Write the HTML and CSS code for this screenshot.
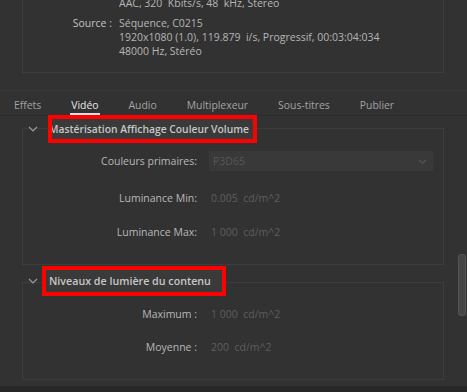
FILE: index.html
```html
<!DOCTYPE html>
<html lang="fr">
<head>
<meta charset="utf-8">
<link rel="stylesheet" href="styles.css">
</head>
<body>
<div class="summary">
  <div class="srow"><span class="slabel"></span><span class="sval">AAC, 320  Kbits/s, 48  kHz, Stereo</span></div>
  <div class="srow gap"><span class="slabel">Source :</span><span class="sval">Séquence, C0215
1920x1080 (1.0), 119.879  i/s, Progressif, 00:03:04:034
48000 Hz, Stéréo</span></div>
</div>
<div class="tabs">
  <span class="tab">Effets</span>
  <span class="tab active">Vidéo</span>
  <span class="tab">Audio</span>
  <span class="tab">Multiplexeur</span>
  <span class="tab">Sous-titres</span>
  <span class="tab">Publier</span>
</div>
<div class="pane">
  <div class="content">
    <div class="group g1">
      <div class="head">
        <svg class="chev" width="10" height="6" viewBox="0 0 10 6"><path d="M1 1 L5 5 L9 1" fill="none" stroke="#9a9a9a" stroke-width="1.2"/></svg>
        <span class="title t1">Mastérisation Affichage Couleur Volume</span>
      </div>
      <div class="rows r1">
        <span class="lbl">Couleurs primaires:</span>
        <div class="select"><span>P3D65</span><svg width="9" height="5" viewBox="0 0 9 5"><path d="M1 1 L4.5 4 L8 1" fill="none" stroke="#555" stroke-width="1.2"/></svg></div>
        <span class="lbl">Luminance Min:</span>
        <span class="val">0.005  cd/m^2</span>
        <span class="lbl">Luminance Max:</span>
        <span class="val">1 000  cd/m^2</span>
      </div>
    </div>
    <div class="group g2">
      <div class="head">
        <svg class="chev" width="10" height="6" viewBox="0 0 10 6"><path d="M1 1 L5 5 L9 1" fill="none" stroke="#9a9a9a" stroke-width="1.2"/></svg>
        <span class="title t2">Niveaux de lumière du contenu</span>
      </div>
      <div class="rows r2">
        <span class="lbl">Maximum :</span>
        <span class="val">1 000  cd/m^2</span>
        <span class="lbl">Moyenne :</span>
        <span class="val">200  cd/m^2</span>
      </div>
    </div>
  </div>
  <div class="scroll"><div class="thumb"></div></div>
</div>
<div class="footer"></div>
</body>
</html>
```
FILE: styles.css
```css
html, body {
  margin: 0;
  padding: 0;
  background: #323232;
  height: 392px;
  overflow: hidden;
}
body {
  font-family: "Open Sans", "Noto Sans", sans-serif;
  font-size: 10.5px;
  color: #bdbdbd;
}
.summary {
  margin: -4px 23px 0 22px;
  border: 1px solid #3d3d3d;
  border-top: none;
  padding-bottom: 14px;
}
.srow {
  display: grid;
  grid-template-columns: 89px 1fr;
  column-gap: 7px;
  line-height: 14px;
}
.srow.gap { margin-top: 6px; }
.slabel { text-align: right; color: #c4c4c4; }
.sval { white-space: pre; color: #b6b6b6; }
.tabs {
  margin-top: 17px;
  border-top: 1px solid #3a3a3a;
  border-bottom: 1px solid #2a2a2a;
  height: 24px;
  display: flex;
  align-items: flex-start;
  padding-left: 14px;
  gap: 30px;
}
.tab {
  line-height: 14px;
  padding-top: 7px;
  color: #a3a3a3;
  font-size: 10.4px;
}
.tab.active {
  color: #e6e6e6;
  border-bottom: 2px solid #e0e0e0;
  padding-bottom: 1px;
  margin: 0 -1px;
  padding-left: 1px;
  padding-right: 1px;
}
.pane {
  display: flex;
  height: 270px;
}
.content {
  flex: 1;
  padding-top: 12px;
}
.group {
  margin: 0 8px 0 22px;
  border: 1px solid #3d3d3d;
}
.g2 { margin-top: 17px; }
.head {
  display: flex;
  align-items: center;
  height: 28px;
}
.g1 .head { margin-top: -14px; }
.g2 .head { margin-top: -17px; height: 30px; }
.chev { margin-left: 5px; margin-right: 11px; }
.g2 .chev { margin-right: 8px; }
.title {
  position: relative;
  font-weight: 600;
  font-size: 10.3px;
  color: #c6c6c6;
  background: #3a3a3a;
  line-height: 20px;
  padding: 0 4px 0 0;
  box-shadow: 1px 2px 3px rgba(110, 110, 110, 0.6);
}
.t2 { padding: 1px 11px 1px 3px; font-size: 10.7px; }
.title::after {
  content: "";
  position: absolute;
  left: -4px;
  right: -4px;
  top: -4px;
  bottom: -4px;
  border: 4px solid #ff0000;
}
.t1::after { left: -1px; }
.rows {
  display: grid;
  grid-template-columns: 174px 1fr;
  column-gap: 12px;
  row-gap: 20px;
  align-items: center;
  padding-right: 10px;
}
.r1 { margin-top: 8px; padding-bottom: 25px; }
.r2 { margin-top: 11px; padding-bottom: 25px; row-gap: 19px; }
.lbl {
  text-align: right;
  color: #b8b8b8;
  line-height: 14px;
}
.val {
  color: #5e5e5e;
  line-height: 14px;
  white-space: pre;
  padding-left: 2px;
}
.select {
  height: 20px;
  background: #393939;
  display: flex;
  align-items: center;
  justify-content: space-between;
  padding: 0 6px 0 4px;
  color: #575757;
}
.scroll {
  width: 15px;
  display: flex;
  flex-direction: column;
  align-items: center;
  padding-top: 138px;
}
.thumb {
  width: 6px;
  height: 60px;
  border-radius: 3px;
  background: #464646;
  border: 1px solid #555;
  margin-left: 4px;
}
.footer {
  height: 6px;
  background: #272727;
}
```
